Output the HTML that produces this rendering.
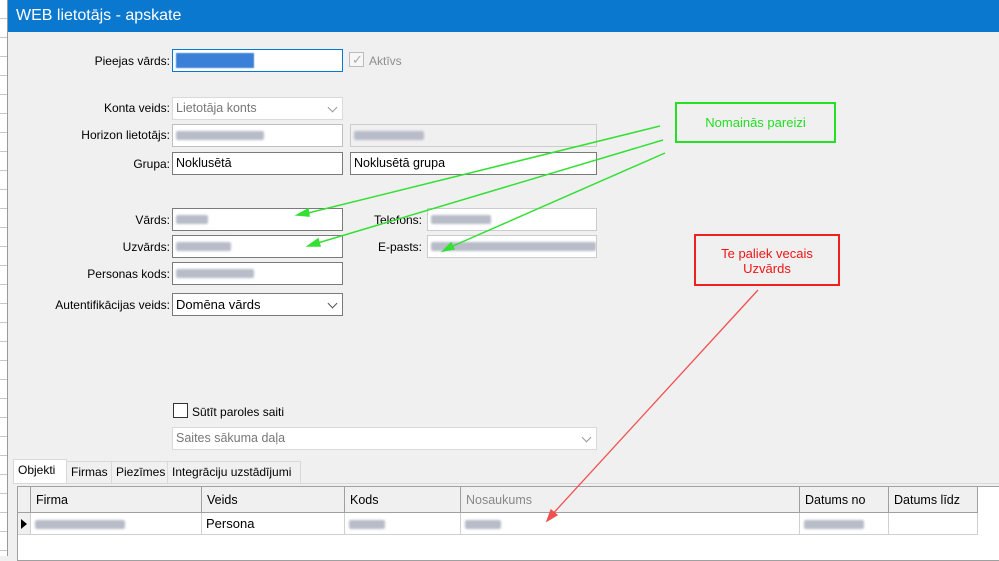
<!DOCTYPE html><html><head><meta charset="utf-8"><style>
*{margin:0;padding:0;box-sizing:border-box}
body{width:999px;height:556px;overflow:hidden;background:#f0f0f0;font-family:"Liberation Sans","DejaVu Sans",sans-serif;font-size:12px;color:#000;position:relative}
.a{position:absolute}
.lbl{position:absolute;text-align:right;white-space:nowrap;line-height:14px}
.in{position:absolute;background:#fff;border:1px solid #7a7a7a;height:23px;line-height:21px;padding-left:3px;white-space:nowrap;overflow:hidden;font-size:12.5px}
.dis{background:#f0f0f0;border-color:#ccc;color:#6d6d6d}
.blur{display:inline-block;height:9px;background:#b8bcc8;filter:blur(1px);vertical-align:middle;border-radius:2px}
.chev{position:absolute;right:6px;top:6px;width:7px;height:7px;border-right:1px solid #555;border-bottom:1px solid #555;transform:rotate(45deg)}
.tab{position:absolute;top:461px;height:22px;border:1px solid #d9d9d9;border-bottom:none;background:#f0f0f0;line-height:20px;padding-left:4px;white-space:nowrap}
.th{position:absolute;top:487px;height:26px;border-right:1px solid #a0a0a0;border-bottom:1px solid #a0a0a0;background:#f0f0f0;line-height:26px;padding-left:5px;font-size:12.5px}
.td{position:absolute;top:513px;height:22px;border-right:1px solid #d0d0d0;border-bottom:1px solid #d0d0d0;line-height:22px;padding-left:4px;background:#fff;font-size:12.5px}
</style></head><body>
<div class="a" style="left:0;top:0;width:8px;height:556px;background:#fff;border-right:1px solid #999;background-image:repeating-linear-gradient(#fff 0 18px,#c8c8c8 18px 19px)"></div>
<div class="a" style="left:8px;top:0;width:991px;height:32px;background:#0a78cf;color:#fff;font-size:16px;line-height:31px;padding-left:8px">WEB lietotājs - apskate</div>

<div class="lbl" style="right:829px;top:54px">Pieejas vārds:</div>
<div class="in" style="left:172px;top:49px;width:171px;border-color:#0078d7"><span style="display:inline-block;width:78px;height:15px;background:#3a7fd8;vertical-align:middle;filter:blur(0.6px)"></span></div>
<div class="a" style="left:349px;top:52px;width:15px;height:15px;border:1px solid #bcbcbc;background:#f7f7f7"></div>
<div class="a" style="left:352px;top:52px;color:#aaa;font-size:13px">✓</div>
<div class="a" style="left:369px;top:54px;color:#8d8d8d">Aktīvs</div>

<div class="lbl" style="right:829px;top:101px">Konta veids:</div>
<div class="in dis" style="left:172px;top:97px;width:171px;background:#fff;border-color:#d9d9d9;color:#777">Lietotāja konts<div class="chev" style="border-color:#999"></div></div>
<div class="lbl" style="right:829px;top:128px">Horizon lietotājs:</div>
<div class="in dis" style="left:172px;top:124px;width:171px;background:#fff;border-color:#c0c0c0"><span class="blur" style="width:88px"></span></div>
<div class="in dis" style="left:350px;top:124px;width:247px"><span class="blur" style="width:70px"></span></div>
<div class="lbl" style="right:829px;top:157px">Grupa:</div>
<div class="in" style="left:172px;top:152px;width:171px">Noklusētā</div>
<div class="in" style="left:350px;top:152px;width:247px">Noklusētā grupa</div>

<div class="lbl" style="right:829px;top:213px">Vārds:</div>
<div class="in" style="left:172px;top:208px;width:171px"><span class="blur" style="width:32px"></span></div>
<div class="lbl" style="right:829px;top:240px">Uzvārds:</div>
<div class="in" style="left:172px;top:235px;width:171px"><span class="blur" style="width:55px"></span></div>
<div class="lbl" style="right:829px;top:267px">Personas kods:</div>
<div class="in" style="left:172px;top:262px;width:171px"><span class="blur" style="width:78px"></span></div>
<div class="lbl" style="right:829px;top:298px">Autentifikācijas veids:</div>
<div class="in" style="left:172px;top:293px;width:171px;font-size:13px">Domēna vārds<div class="chev"></div></div>

<div class="lbl" style="right:577px;top:213px">Telefons:</div>
<div class="in dis" style="left:427px;top:208px;width:170px;background:#fff;border-color:#ccc"><span class="blur" style="width:60px"></span></div>
<div class="lbl" style="right:577px;top:240px">E-pasts:</div>
<div class="in dis" style="left:427px;top:235px;width:170px;background:#fff;border-color:#ccc"><span class="blur" style="width:165px"></span></div>

<div class="a" style="left:173px;top:403px;width:15px;height:15px;border:1px solid #333;background:#fff"></div>
<div class="a" style="left:192px;top:405px">Sūtīt paroles saiti</div>
<div class="in dis" style="left:172px;top:427px;width:425px;background:#fff;border-color:#d9d9d9;color:#777">Saites sākuma daļa<div class="chev" style="border-color:#999"></div></div>

<div class="tab" style="left:66px;width:46px">Firmas</div>
<div class="tab" style="left:111px;width:57px">Piezīmes</div>
<div class="tab" style="left:167px;width:134px">Integrāciju uzstādījumi</div>
<div class="tab" style="left:13px;top:459px;width:54px;height:25px;background:#fff">Objekti</div>
<div class="a" style="left:13px;top:483px;width:986px;height:73px;background:#f0f0f0;border-top:1px solid #d9d9d9"></div>
<div class="a" style="left:17px;top:486px;width:982px;height:75px;background:#fff;border:1px solid #a0a0a0;border-right:none"></div>
<div class="th" style="left:18px;width:13px;padding:0"></div>
<div class="th" style="left:31px;width:171px">Firma</div>
<div class="th" style="left:202px;width:143px">Veids</div>
<div class="th" style="left:345px;width:116px">Kods</div>
<div class="th" style="left:461px;width:339px;color:#888">Nosaukums</div>
<div class="th" style="left:800px;width:89px">Datums no</div>
<div class="th" style="left:889px;width:89px">Datums līdz</div>
<div class="td" style="left:18px;width:13px;background:#f0f0f0;padding:0"><div class="a" style="left:3px;top:6px;border-left:6px solid #000;border-top:5px solid transparent;border-bottom:5px solid transparent"></div></div>
<div class="td" style="left:31px;width:171px"><span class="blur" style="width:90px"></span></div>
<div class="td" style="left:202px;width:143px;font-size:13px">Persona</div>
<div class="td" style="left:345px;width:116px"><span class="blur" style="width:36px"></span></div>
<div class="td" style="left:461px;width:339px"><span class="blur" style="width:36px"></span></div>
<div class="td" style="left:800px;width:89px"><span class="blur" style="width:60px"></span></div>
<div class="td" style="left:889px;width:89px"></div>

<div class="a" style="left:675px;top:102px;width:161px;height:41px;border:2px solid #22e022;color:#22dd22;font-size:13px;text-align:center;line-height:37px">Nomainās pareizi</div>
<div class="a" style="left:694px;top:234px;width:146px;height:52px;border:2px solid #ee2020;color:#ee1515;font-size:13px;text-align:center;line-height:15px;padding-top:10px">Te paliek vecais<br>Uzvārds</div>
<svg class="a" style="left:0;top:0" width="999" height="556">
<g stroke="#33e033" stroke-width="1.5" fill="#33e033">
<line x1="660" y1="126" x2="300" y2="215"/><polygon points="297,215 308,209 309,216"/>
<line x1="663" y1="140" x2="311" y2="245"/><polygon points="308,246 318,239 320,246"/>
<line x1="665" y1="153" x2="446" y2="249"/><polygon points="443,251 451,243 454,249"/>
</g>
<g stroke="#f05050" stroke-width="1.3" fill="#f05050">
<line x1="758" y1="290" x2="549" y2="518"/><polygon points="547,521 551,510 557,515"/>
</g>
</svg>
</body></html>
